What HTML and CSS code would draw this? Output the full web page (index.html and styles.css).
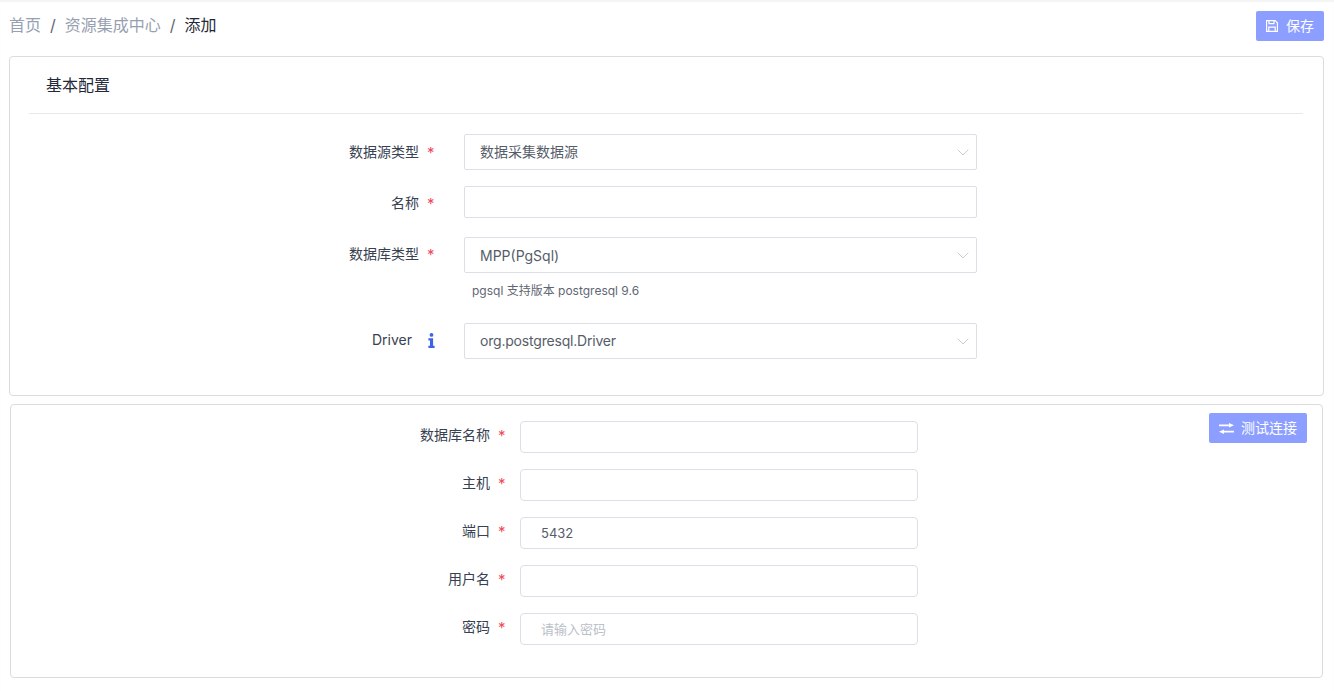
FILE: index.html
```html
<!DOCTYPE html>
<html lang="zh">
<head>
<meta charset="utf-8">
<title>添加</title>
<link rel="stylesheet" href="styles.css">
</head>
<body>
<div class="topbar">
  <nav class="crumbs">
    <span class="crumb">首页</span><span class="sep">/</span><span class="crumb">资源集成中心</span><span class="sep">/</span><span class="crumb current">添加</span>
  </nav>
  <button class="btn save" type="button">
    <svg class="ico" width="14" height="14" viewBox="0 0 14 14" fill="none" stroke="#fff" stroke-width="1.2"><path d="M1.600 1.600h8.600l2.200 2.200v8.600H1.600z"/><path d="M4 1.600v3h5v-3M3.800 12.400V8.200h6.400v4.200"/></svg>
    <span class="btn-text">保存</span>
  </button>
</div>

<section class="card basic">
  <h2 class="card-title">基本配置</h2>
  <div class="form basic-form">
    <div class="row">
      <label class="label first">数据源类型<i class="star">*</i></label>
      <div class="select tall"><span class="cjk-value">数据采集数据源</span><svg class="chev" width="12" height="7" viewBox="0 0 12 7" fill="none" stroke="#c9cdd6"><path d="M.7.7 6 6 11.300.7"/></svg></div>
    </div>
    <div class="row">
      <label class="label">名称<i class="star">*</i></label>
      <div class="input"></div>
    </div>
    <div class="row compact">
      <label class="label">数据库类型<i class="star">*</i></label>
      <div class="select tall"><span>MPP(PgSql)</span><svg class="chev" width="12" height="7" viewBox="0 0 12 7" fill="none" stroke="#c9cdd6"><path d="M.7.7 6 6 11.300.7"/></svg></div>
    </div>
    <p class="hint">pgsql 支持版本 postgresql 9.6</p>
    <div class="row">
      <label class="label driver">Driver<svg class="info" width="7" height="15" viewBox="0 0 7 15" fill="#3f63e8"><circle cx="3.500" cy="1.900" r="1.900"/><path d="M.4 5.300h4.700v7.500h1.500V15H.4v-2.200h1.600V7.500H.4z"/></svg></label>
      <div class="select tall"><span class="tight">org.postgresql.Driver</span><svg class="chev" width="12" height="7" viewBox="0 0 12 7" fill="none" stroke="#c9cdd6"><path d="M.7.7 6 6 11.300.7"/></svg></div>
    </div>
  </div>
</section>

<section class="card conn">
  <div class="form conn-form">
    <div class="row"><label class="label">数据库名称<i class="star">*</i></label><div class="input"></div></div>
    <div class="row"><label class="label">主机<i class="star">*</i></label><div class="input"></div></div>
    <div class="row"><label class="label">端口<i class="star">*</i></label><div class="input value">5432</div></div>
    <div class="row"><label class="label">用户名<i class="star">*</i></label><div class="input"></div></div>
    <div class="row"><label class="label">密码<i class="star">*</i></label><div class="input placeholder"><span class="cjk-value">请输入密码</span></div></div>
  </div>
  <button class="btn test" type="button">
    <svg class="ico" width="15" height="11" viewBox="0 0 15 11" fill="#fff"><path d="M0 1.400h10V0l5 2.300-5 2.300V3.200H0zM15 7.800H5V6.400L0 8.700 5 11V9.600h10z"/></svg>
    <span class="btn-text">测试连接</span>
  </button>
</section>
</body>
</html>
```
FILE: styles.css
```css
* { box-sizing: border-box; }
html, body { margin: 0; padding: 0; }
body {
  height: 691px;
  overflow: hidden;
  background: #fff;
  color: #333;
  font-family: Inter, "Noto Sans CJK SC", sans-serif;
  font-size: 14px;
  border-top: 1px solid #f4f4f4;
  box-shadow: inset 0 1px 1px #f6f6f6;
}
.topbar {
  display: flex;
  justify-content: space-between;
  align-items: center;
  height: 55px;
  padding: 0 10px 6px 9px;
}
.crumbs { display: flex; align-items: center; font-size: 16px; line-height: 24px; margin-top: -1px; }
.crumb { color: #97a0b0; }
.crumb.current { color: #1f2937; }
.sep { color: #5f6673; margin: 0 9px; }
.btn {
  display: inline-flex;
  align-items: center;
  border: 0;
  border-radius: 2px;
  background: #8c9eff;
  color: #fff;
  font: inherit;
  padding: 0;
  height: 30px;
}
.btn-text { position: relative; top: -1px; }
.save { width: 68px; padding-left: 9px; gap: 7px; }
.test { width: 98px; height: 30px; padding-left: 10px; gap: 7px; margin: 8px 15px 0 auto; flex: none; }
.card {
  border: 1px solid #dcdcdc;
  border-radius: 4px;
  background: #fff;
}
.basic { margin: 0 10px 8px 9px; height: 340px; padding: 0 20px 0 19px; }
.conn { margin: 0 11px 0 10px; height: 274px; display: flex; align-items: flex-start; }
.card-title {
  margin: 0;
  height: 57px;
  padding: 0 17px;
  border-bottom: 1px solid #e8e8e8;
  font-size: 16px;
  font-weight: 400;
  line-height: 57px;
  color: #1f2937;
}
.form { display: flex; flex-direction: column; gap: 16px; }
.basic-form { padding-top: 20px; padding-left: 435px; }
.conn-form { padding-top: 16px; padding-left: 509px; }
.row { display: flex; position: relative; }
.row.compact { margin-top: 3px; margin-bottom: -16px; }
.label {
  position: absolute;
  right: 100%;
  top: 1px;
  margin-right: 45px;
  height: 32px;
  line-height: 32px;
  white-space: nowrap;
  font-size: 14px;
  color: #374151;
}
.label.first { top: 2px; }
.label.driver { margin-right: 52px; }
.conn-form .label { margin-right: 30px; top: -2px; }
.star {
  position: absolute;
  left: 100%;
  margin-left: 8px;
  top: 1px;
  font-style: normal;
  font-size: 15px;
  color: #f0475a;
}
.info { position: absolute; left: 100%; margin-left: 16px; top: 9px; }
.input, .select {
  border: 1px solid #dcdfe6;
  border-radius: 2px;
  background: #fff;
  height: 32px;
  display: flex;
  align-items: center;
  justify-content: space-between;
  color: #565d69;
}
.basic-form .input, .basic-form .select { width: 513px; padding: 0 7px 0 15px; }
.conn-form .input { width: 398px; padding: 0 20px; border-radius: 4px; font-size: 13px; }
.select.tall { height: 36px; }
.cjk-value { position: relative; top: -1px; }
.tight { letter-spacing: -0.2px; position: relative; top: -1px; }
.placeholder { color: #bcc0c8; }
.hint {
  margin: 0 0 -16px;
  padding: 9px 0 0 8px;
  height: 50px;
  font-size: 12px;
  line-height: 18px;
  color: #5f6673;
}
```
